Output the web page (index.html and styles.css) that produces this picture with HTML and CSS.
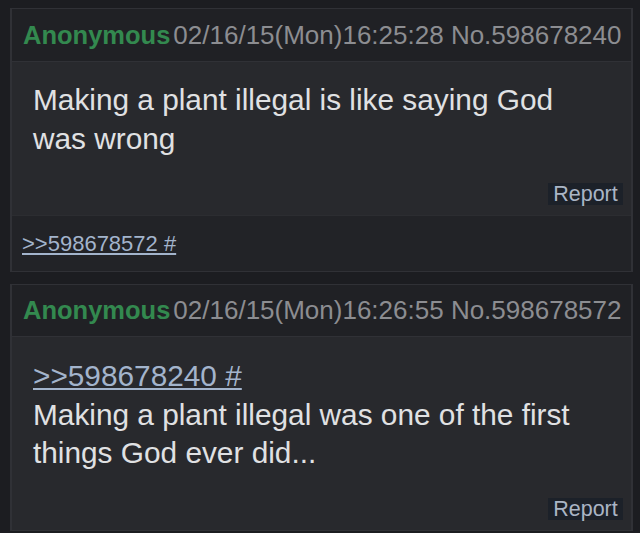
FILE: index.html
```html
<!DOCTYPE html>
<html>
<head>
<meta charset="utf-8">
<link rel="stylesheet" href="styles.css">
</head>
<body>
<div class="thread">
  <div class="post">
    <div class="post-head"><span class="name">Anonymous</span><span class="meta">02/16/15(Mon)16:25:28 No.598678240</span></div>
    <div class="post-body">
      <div class="text">Making a plant illegal is like saying God was wrong</div>
      <div class="actions"><span class="report">Report</span></div>
    </div>
    <div class="post-foot"><a class="backlink">&gt;&gt;598678572 #</a></div>
  </div>
  <div class="post">
    <div class="post-head head2"><span class="name">Anonymous</span><span class="meta">02/16/15(Mon)16:26:55 No.598678572</span></div>
    <div class="post-body body2">
      <div class="text"><a class="quotelink">&gt;&gt;598678240 #</a><br>Making a plant illegal was one of the first things God ever did...</div>
      <div class="actions"><span class="report">Report</span></div>
    </div>
  </div>
</div>
</body>
</html>
```
FILE: styles.css
```css
html, body {
  margin: 0;
  padding: 0;
  background: #1c1d21;
  font-family: "Liberation Sans", Arial, sans-serif;
}
.thread {
  padding: 8px 7px 0 10px;
  display: flex;
  flex-direction: column;
  gap: 12px;
}
.post {
  background: #28292d;
  border: 1px solid #303136;
  border-right-width: 2px;
  border-left-width: 2px;
}
.post-head {
  height: 53px;
  box-sizing: border-box;
  background: #202125;
  border-bottom: 1px solid #303136;
  display: flex;
  align-items: center;
  padding-left: 11px;
  white-space: nowrap;
}
.head2 {
  height: 52px;
}
.name {
  color: #33894f;
  font-weight: bold;
  font-size: 25.5px;
  margin-right: 3px;
}
.meta {
  color: #8c8d91;
  font-size: 26px;
}
.post-body {
  padding: 19px 8px 10px 21px;
}
.body2 {
  padding-top: 20px;
}
.text {
  color: #e0e1e3;
  font-size: 29.8px;
  line-height: 38.5px;
  padding-right: 40px;
}
.quotelink, .backlink {
  color: #a3b4cc;
  text-decoration: underline;
}
.actions {
  display: flex;
  justify-content: flex-end;
  margin-top: 25px;
}
.report {
  background: #1c2129;
  color: #aab5c5;
  font-size: 21.5px;
  height: 22px;
  line-height: 22px;
  width: 75px;
  text-align: center;
}
.post-foot {
  height: 56px;
  box-sizing: border-box;
  background: #222327;
  border-top: 1px solid #2c2d31;
  display: flex;
  align-items: center;
  padding-left: 10px;
}
.backlink {
  font-size: 22px;
}
```
